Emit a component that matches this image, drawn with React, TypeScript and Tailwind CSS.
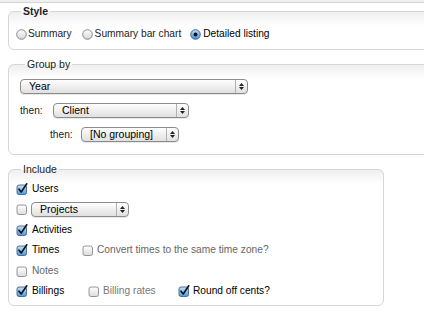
import React from "react";

const Radio = ({ checked }: { checked?: boolean }) => (
    <svg width="11" height="11" viewBox="0 0 11 11" className="shrink-0">
        <defs>
            <linearGradient id="rg" x1="0" y1="0" x2="0" y2="1">
                <stop offset="0" stopColor="#ffffff" />
                <stop offset="1" stopColor="#d6d6d6" />
            </linearGradient>
            <linearGradient id="rb" x1="0" y1="0" x2="0" y2="1">
                <stop offset="0" stopColor="#bfe0fb" />
                <stop offset="1" stopColor="#3d8ee0" />
            </linearGradient>
        </defs>
        <circle cx="5.5" cy="5.5" r="4.8" fill={checked ? "url(#rb)" : "url(#rg)"} stroke={checked ? "#3a5f8e" : "#7d7d7d"} strokeWidth="0.9" />
        {checked && <circle cx="5.5" cy="5.5" r="1.9" fill="#111" />}
    </svg>
);

const Check = ({ checked }: { checked?: boolean }) => (
    <svg width="12" height="12" viewBox="0 0 12 12" className="shrink-0">
        <defs>
            <linearGradient id="cg" x1="0" y1="0" x2="0" y2="1">
                <stop offset="0" stopColor="#ffffff" />
                <stop offset="1" stopColor="#dcdcdc" />
            </linearGradient>
            <linearGradient id="cb" x1="0" y1="0" x2="0" y2="1">
                <stop offset="0" stopColor="#c6e3fb" />
                <stop offset="1" stopColor="#4b97e2" />
            </linearGradient>
        </defs>
        <rect x="1" y="2" width="9.5" height="9.5" rx="2" fill={checked ? "url(#cb)" : "url(#cg)"} stroke={checked ? "#41628c" : "#8a8a8a"} strokeWidth="0.9" />
        {checked && <path d="M3 6.2 L5.2 9 L10.8 0.8" fill="none" stroke="#111" strokeWidth="1.6" strokeLinecap="round" strokeLinejoin="round" />}
    </svg>
);

const Select = ({ label, width }: { label: string; width: string }) => (
    <div className={`${width} h-[15px] flex items-stretch rounded-[4px] border border-[#8c8c8c] bg-[linear-gradient(#ffffff,#ececec_60%,#e0e0e0)] shadow-[0_1px_0_#e8e8e8]`}>
        <div className="flex-1 pl-[8px] text-[10.5px] leading-[13px] text-black">{label}</div>
        <div className="w-[12px] border-l border-[#b0b0b0] flex flex-col items-center justify-center gap-[1px]">
            <svg width="5" height="3" viewBox="0 0 5 3"><path d="M0 3 L2.5 0 L5 3 Z" fill="#222" /></svg>
            <svg width="5" height="3" viewBox="0 0 5 3"><path d="M0 0 L2.5 3 L5 0 Z" fill="#222" /></svg>
        </div>
    </div>
);

const Box = ({ title, bold, className, children }: { title: string; bold?: boolean; className: string; children: React.ReactNode }) => (
    <fieldset className={`ml-2 border border-[#d6d6d6] rounded-[6px] bg-[linear-gradient(#efefef,#ffffff_14px)] ${className}`}>
        <legend className={`ml-[5px] px-[2px] text-[10.5px] leading-[13px] text-[#222] ${bold ? "font-bold" : ""}`}>{title}</legend>
        {children}
    </fieldset>
);

const App = () => {
    return (
        <div className="w-[424px] h-[318px] overflow-hidden bg-white text-[10.2px] text-[#222] font-['Liberation_Sans',Arial,sans-serif]">
            <div className="h-[3px] bg-[#efefef] border-b border-[#d4d4d4]" />

            {/* Style */}
            <Box title="Style" bold className="w-[440px] mt-[2px] pl-[7px] pb-[5px]">
                <div className="flex items-center h-[20px] mt-[6px]">
                    <Radio />
                    <span className="ml-[1px]">Summary</span>
                    <span className="ml-[10px]"><Radio /></span>
                    <span className="ml-[2px]">Summary bar chart</span>
                    <span className="ml-[9px]"><Radio checked /></span>
                    <span className="ml-[2px] text-black">Detailed listing</span>
                </div>
            </Box>

            {/* Group by */}
            <Box title="Group by" className="w-[440px] mt-[8px] pl-[11px] pb-[11px]">
                <div className="mt-[8px]">
                    <Select label="Year" width="w-[228px]" />
                </div>
                <div className="flex items-center mt-[9px]">
                    <span className="w-[33px]">then:</span>
                    <Select label="Client" width="w-[136px]" />
                </div>
                <div className="flex items-center mt-[9px] pl-[30px]">
                    <span className="w-[31px]">then:</span>
                    <Select label="[No grouping]" width="w-[98px]" />
                </div>
            </Box>

            {/* Include */}
            <Box title="Include" className="w-[376px] mt-[8px] pl-[7px] pb-[4px]">
                <div className="pt-[3px]">
                    <div className="flex items-center h-[20px] gap-[4px]">
                        <Check checked />
                        <span className="text-black">Users</span>
                    </div>
                    <div className="flex items-center h-[21px] gap-[3px]">
                        <Check />
                        <Select label="Projects" width="w-[98px]" />
                    </div>
                    <div className="flex items-center h-[20px] gap-[4px]">
                        <Check checked />
                        <span className="text-black">Activities</span>
                    </div>
                    <div className="flex items-center h-[21px]">
                        <div className="w-[66px] flex items-center gap-[4px]">
                            <Check checked />
                            <span className="text-black">Times</span>
                        </div>
                        <Check />
                        <span className="ml-[3px] text-[#666]">Convert times to the same time zone?</span>
                    </div>
                    <div className="flex items-center h-[20px] gap-[4px]">
                        <Check />
                        <span className="text-[#666]">Notes</span>
                    </div>
                    <div className="flex items-center h-[20px]">
                        <div className="w-[72px] flex items-center gap-[4px]">
                            <Check checked />
                            <span className="text-black">Billings</span>
                        </div>
                        <div className="w-[90px] flex items-center gap-[3px]">
                            <Check />
                            <span className="text-[#777]">Billing rates</span>
                        </div>
                        <Check checked />
                        <span className="ml-[3px] text-black">Round off cents?</span>
                    </div>
                </div>
            </Box>
        </div>
    );
};

export default App;
